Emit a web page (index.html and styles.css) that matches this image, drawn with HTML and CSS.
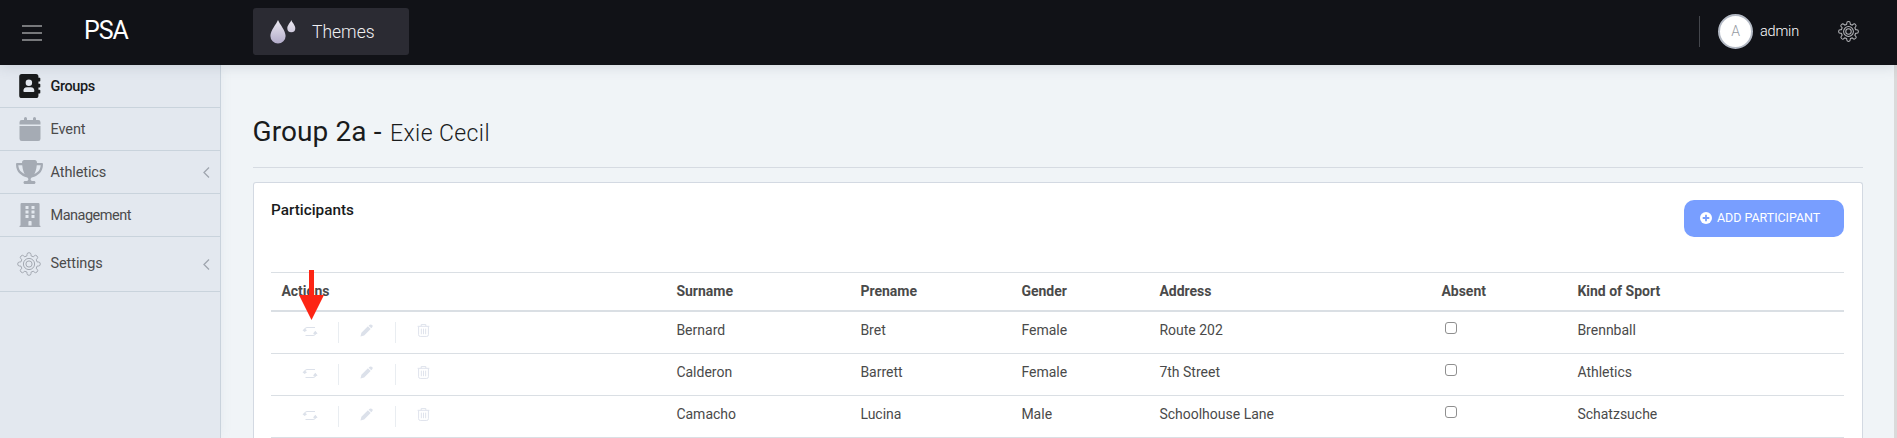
FILE: index.html
```
<!DOCTYPE html>
<html lang="en">
<head>
<meta charset="utf-8">
<title>PSA</title>
<link rel="stylesheet" href="styles.css">
</head>
<body>
<svg class="defs" aria-hidden="true">
  <defs>
    <linearGradient id="dropFill" x1="0" y1="0" x2="0" y2="1"><stop offset="0" stop-color="#eceaf2"/><stop offset="1" stop-color="#b2abc9"/></linearGradient>
    <symbol id="gear" viewBox="-12 -12 24 24">
      <path d="M-2-8.2V-9.5Q-2-11.3 0-11.3T2-9.5V-8.2L4.3-7.2L5.2-8.1Q6.6-9.5 8-8T8.1-5.2L7.2-4.3L8.2-2H9.5Q11.3-2 11.3 0T9.5 2H8.2L7.2 4.3L8.1 5.2Q9.5 6.6 8 8T5.2 8.1L4.3 7.2L2 8.2V9.5Q2 11.3 0 11.3T-2 9.5V8.2L-4.3 7.2L-5.2 8.1Q-6.6 9.5-8 8T-8.1 5.2L-7.2 4.3L-8.2 2H-9.5Q-11.3 2-11.3 0T-9.5-2H-8.2L-7.2-4.3L-8.1-5.2Q-9.5-6.6-8-8T-5.2-8.1L-4.3-7.2Z"/>
      <circle r="5.6"/><circle r="3.1"/>
    </symbol>
    <symbol id="swap" viewBox="0 0 16 12"><path d="M13 2.500H5Q2.800 2.500 2.800 4.500M3.500 10.500H11Q13.500 10.500 13.500 8.500"/><path class="fill" d="M.500 5.300L2.700 3.500L5 5.300L2.700 7ZM11 8.600L13.300 5.800L15.600 8.600L13.300 9.500Z"/></symbol>
    <symbol id="pencil" viewBox="0 0 14 14"><path class="fill" d="M.5 13.500L1.500 9.500L8.500 2.500L11.500 5.500L4.500 12.500ZM9.300 1.800Q11.200-.2 13 1T12.200 4.700Z"/></symbol>
    <symbol id="trash" viewBox="0 0 14 14"><path d="M.7 2.5H13.3M4.5 2.3V.6H9.5V2.3M1.7 2.8V11.5Q1.7 13.4 3.5 13.4H10.5Q12.3 13.4 12.3 11.5V2.8M4.7 5V11M7 5V11M9.3 5V11"/></symbol>
  </defs>
</svg>

<header class="topbar">
  <svg class="burger" viewBox="0 0 20 16"><path d="M0 1H20M0 8H20M0 15H20"/></svg>
  <span class="brand">PSA</span>
  <div class="themes">
    <svg class="drops" viewBox="0 0 26 24"><path d="M8 0C9.5 4 15.6 10.5 15.6 16A7.6 7.6 0 0 1 .4 16C.4 10.500 6.500 4 8 0ZM21.300 0C22 2.500 25.300 5 25.300 8.300A4 4 0 0 1 17.300 8.300C17.300 5 20.600 2.500 21.300 0Z" fill="url(#dropFill)"/></svg>
    <span class="themes-label">Themes</span>
  </div>
  <div class="account">
    <span class="avatar">A</span>
    <span class="user">admin</span>
  </div>
  <svg class="gear gear-top"><use href="#gear"/></svg>
</header>

<div class="shell">
  <nav class="sidebar">
    <a class="item active">
      <svg class="nav-icon" viewBox="0 0 512 512"><path fill-rule="evenodd" d="M80 0H384Q436 0 436 56V456Q436 512 384 512H80Q26 512 26 456V56Q26 0 80 0ZM232 118A69 69 0 1 0 232 256A69 69 0 1 0 232 118ZM190 280Q115 280 115 365Q115 384 136 384H328Q349 384 349 365Q349 280 274 280ZM436 80H463Q476 80 476 96V144Q476 160 463 160H436ZM436 208H463Q476 208 476 224V272Q476 288 463 288H436ZM436 336H463Q476 336 476 352V400Q476 416 463 416H436Z"/></svg>
      <span class="item-label groups">Groups</span>
    </a>
    <a class="item">
      <svg class="nav-icon" viewBox="0 0 512 512"><path d="M32 464a48 48 0 0 0 48 48h352a48 48 0 0 0 48-48V192H32zM432 64h-48V32a32 32 0 0 0-64 0v32H192V32a32 32 0 0 0-64 0v32H80a48 48 0 0 0-48 48v48h448v-48a48 48 0 0 0-48-48z"/></svg>
      <span class="item-label">Event</span>
    </a>
    <a class="item">
      <svg class="nav-icon wide" viewBox="0 0 576 512"><path d="M400 0H176c-27 0-48 22-47 48 0 5 0 11 1 16H24C11 64 0 75 0 88c0 93 33 157 78 201 44 44 98 67 144 79 27 7 42 27 42 45s-15 35-33 35h-39c-18 0-32 14-32 32s14 32 32 32h192c18 0 32-14 32-32s-14-32-32-32h-39c-18 0-33-15-33-35s16-38 42-45c46-12 100-35 144-79 45-44 78-108 78-201 0-13-11-24-24-24H446c1-5 1-11 1-16 1-26-20-48-47-48zM49 112h84c9 90 29 149 52 189-25-11-51-26-73-48-32-31-59-76-63-141zm415 141c-22 22-48 37-73 48 23-40 43-99 52-189h84c-4 65-31 110-63 141z"/></svg>
      <span class="item-label athletics">Athletics</span>
      <svg class="chev" viewBox="0 0 7 11"><path d="M6 .5L1 5.5L6 10.500"/></svg>
    </a>
    <a class="item">
      <svg class="nav-icon" viewBox="0 0 512 512"><path fill-rule="evenodd" d="M76 0H436Q460 0 460 24V480Q480 480 480 500V512H32V500Q32 480 54 480V24Q54 0 76 0ZM160 65V128H224V65ZM288 65V128H352V65ZM160 160V224H224V160ZM288 160V224H352V160ZM160 256V320H224V256ZM288 256V320H352V256ZM222 480H290V400Q290 384 274 384H238Q222 384 222 400Z"/></svg>
      <span class="item-label management">Management</span>
    </a>
    <a class="item tall">
      <svg class="gear gear-side"><use href="#gear"/></svg>
      <span class="item-label settings">Settings</span>
      <svg class="chev" viewBox="0 0 7 11"><path d="M6 .5L1 5.5L6 10.500"/></svg>
    </a>
  </nav>

  <main class="content">
    <h1 class="title"><span class="group-name">Group 2a -</span><span class="leader">Exie Cecil</span></h1>
    <section class="card">
      <div class="card-head">
        <h2 class="card-title">Participants</h2>
        <button class="add"><svg class="plus" viewBox="0 0 12 12"><circle cx="6" cy="6" r="6"/><path d="M6 2.700V9.300M2.700 6H9.300"/></svg><span class="add-label">ADD PARTICIPANT</span></button>
      </div>
      <div class="table">
        <div class="row head"><span class="actions-head">Actions<svg class="arrow" viewBox="0 0 25 50"><path d="M10 0H15V25H25L12.500 50L0 25H10Z"/></svg></span><span>Surname</span><span>Prename</span><span>Gender</span><span>Address</span><span>Absent</span><span>Kind of Sport</span></div>
        <div class="row"><div class="actions"><i><svg class="swap"><use href="#swap"/></svg></i><i><svg><use href="#pencil"/></svg></i><i><svg><use href="#trash"/></svg></i></div><span>Bernard</span><span>Bret</span><span>Female</span><span>Route 202</span><span><input class="check" type="checkbox"></span><span>Brennball</span></div>
        <div class="row"><div class="actions"><i><svg class="swap"><use href="#swap"/></svg></i><i><svg><use href="#pencil"/></svg></i><i><svg><use href="#trash"/></svg></i></div><span>Calderon</span><span>Barrett</span><span>Female</span><span>7th Street</span><span><input class="check" type="checkbox"></span><span>Athletics</span></div>
        <div class="row"><div class="actions"><i><svg class="swap"><use href="#swap"/></svg></i><i><svg><use href="#pencil"/></svg></i><i><svg><use href="#trash"/></svg></i></div><span>Camacho</span><span>Lucina</span><span>Male</span><span>Schoolhouse Lane</span><span><input class="check" type="checkbox"></span><span>Schatzsuche</span></div>
      </div>
    </section>
  </main>
  <div class="scrollbar"></div>
</div>
</body>
</html>
```

FILE: styles.css
```
* { box-sizing: border-box; }
body { margin: 0; height: 438px; overflow: hidden; background: #f0f4f7; color: #4a4a4a; font: 14px/20px Roboto, "Open Sans", sans-serif; }
svg { display: block; flex: none; }
.defs { position: absolute; width: 0; height: 0; }

.topbar { position: relative; display: flex; align-items: center; height: 65px; background: #111217; color: #fff; box-shadow: 0 0 14px rgba(60, 75, 95, .2); z-index: 2; }
.burger { width: 20px; height: 16px; margin: 0 0 0 22px; stroke: #dedee0; stroke-width: 1; fill: none; }
.brand { width: 169px; margin-left: 42px; font-size: 25px; line-height: 30px; letter-spacing: -1.1px; padding-bottom: 3px; }
.themes { display: flex; align-items: center; width: 156px; height: 47px; margin-bottom: 2px; padding-left: 17px; border-radius: 3px; background: #2b2b33; }
.drops { width: 26px; height: 24px; }
.themes-label { margin-left: 16px; font-size: 17.500px; font-weight: 300; color: #f0f0f2; }
.account { display: flex; align-items: center; height: 31px; margin: 0 0 3px auto; padding-left: 18px; border-left: 1px solid #44464c; }
.avatar { width: 35px; height: 35px; border: 2px solid #b4bac5; border-radius: 50%; background: #fff; color: #969ba3; font-weight: 300; line-height: 31px; text-align: center; }
.user { width: 78px; margin-left: 7px; padding-top: 1px; font-size: 14.500px; font-weight: 300; letter-spacing: -.2px; }
.gear { fill: none; overflow: visible; stroke-linejoin: round; }
.gear-top { width: 21px; height: 21px; margin: 0 38px 3px 0; stroke: #b6b7bb; stroke-width: 1.150; }
.gear-side { width: 24px; height: 24px; margin: 0 9.500px 0 17px; stroke: #a4a9b2; stroke-width: 1; }

.shell { display: flex; height: 373px; }
.sidebar { flex: none; width: 221px; background: #e3e8ef; border-right: 1px solid #c9d3dc; box-shadow: 0 0 10px rgba(160, 175, 190, .12); }
.item { display: flex; align-items: center; height: 43px; border-bottom: 1px solid #c9d3dc; color: #4b4b4b; }
.item.tall { height: 55px; }
.nav-icon { width: 24px; height: 24px; margin: 0 9px 0 17.500px; fill: #a5abb4; }
.nav-icon.wide { width: 27px; margin: 0 7.500px 0 16px; }
.active .nav-icon { fill: #191b1c; }
.item-label { padding-top: 1px; font-size: 14.500px; letter-spacing: -.1px; }
.management { letter-spacing: -.5px; }
.settings { padding: 0 0 1px; }
.active .item-label { color: #191b1c; font-weight: 500; letter-spacing: -.4px; }
.chev { width: 7px; height: 11px; margin: 0 10px 0 auto; fill: none; stroke: #a0a6af; stroke-width: 1.300; }

.content { display: flex; flex-direction: column; width: 1673px; padding: 48px 31px 0 31.500px; }
.title { display: flex; flex: none; align-items: baseline; height: 55px; margin: 0 0 14px; border-bottom: 1px solid #d6dbe2; color: #191b1c; font-size: 28px; line-height: 38px; font-weight: 400; white-space: nowrap; }
.group-name { width: 137.500px; letter-spacing: .1px; }
.leader { font-size: 23px; font-weight: 300; letter-spacing: .4px; }
.card { flex: none; height: 256px; padding: 17px 18px 0 17.500px; border: 1px solid #d3d9e2; border-bottom: 0; border-radius: 3px 3px 0 0; background: #fff; }
.card-head { display: flex; justify-content: space-between; align-items: flex-start; height: 72px; }
.card-title { margin: 0; padding-top: 1px; color: #191b1c; font-size: 15.300px; line-height: 19px; font-weight: 500; }
.add { display: flex; align-items: center; width: 160px; height: 37px; padding: 0 0 2px 16px; border: 0; border-radius: 10px; background: #789eff; color: #fff; font: 400 12.500px/20px Roboto, sans-serif; }
.plus { width: 12px; height: 12px; margin-right: 5px; fill: #fff; stroke-width: 0; }
.plus path { stroke: #789eff; stroke-width: 1.800; }
.add-label { white-space: nowrap; letter-spacing: -.05px; }

.table { border-top: 1px solid #dadfe4; }
.row { display: grid; grid-template-columns: 395px 184px 161px 138px 282px 136px 1fr; height: 42px; border-bottom: 1px solid #dadfe4; line-height: 37px; white-space: nowrap; }
.row > span { padding-left: 10.400px; }
.head { height: 39px; border-bottom: 2px solid #dadfe4; font-weight: 700; }
.actions-head { position: relative; }
.arrow { position: absolute; z-index: 3; left: 27.500px; top: -3px; width: 25px; height: 50px; fill: #fd2514; }
.actions { display: flex; align-items: flex-start; padding: 10px 0 0 11px; }
.actions i { display: flex; align-items: center; justify-content: center; width: 57px; height: 21px; padding: 0 1px 4px 0; border-right: 1px solid #e9edf1; }
.actions i:last-child { border: 0; padding-right: 2px; }
.actions svg { width: 13px; height: 13px; fill: none; stroke: #dce1ea; stroke-width: 1; }
.actions .swap { width: 16px; height: 12px; }
.fill { fill: #dce1ea; stroke: none; }
.check { display: block; width: 12px; height: 12px; margin: 10px 0 0 3.600px; appearance: none; border: 1px solid #8f8f8f; border-radius: 3px; background: #fff; }
.scrollbar { flex: none; width: 3px; background: #dadada; }
```
